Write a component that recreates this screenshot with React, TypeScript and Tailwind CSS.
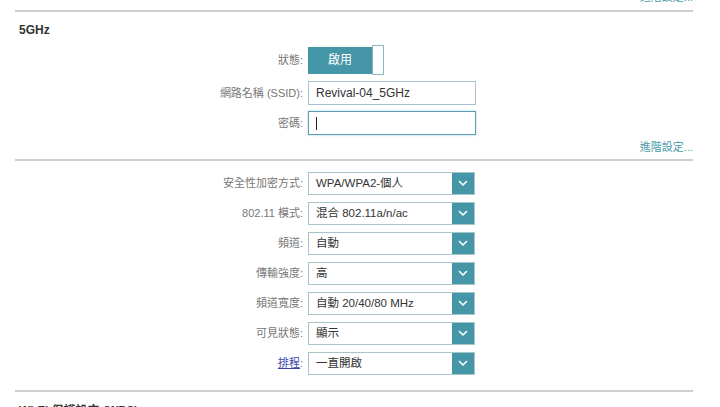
import React from "react";

const font = { fontFamily: '"Liberation Sans", "Noto Sans CJK TC", sans-serif' };

function Chevron() {
  return (
    <svg width="10" height="7" viewBox="0 0 10 7" fill="none">
      <path d="M1.5 1.5 L5 5 L8.5 1.5" stroke="white" strokeWidth="1.6" strokeLinecap="round" strokeLinejoin="round" />
    </svg>
  );
}

function Row({ label, children, link }: { label: string; children: React.ReactNode; link?: boolean }) {
  return (
    <div className="flex items-center">
      <div className="w-[308px] pr-[5px] text-right text-[11px] text-[#777] leading-none">
        {link ? (
          <span>
            <span className="text-[#3a3fa8] underline">{label}</span>:
          </span>
        ) : (
          <span>{label}:</span>
        )}
      </div>
      {children}
    </div>
  );
}

function Select({ label, value, link }: { label: string; value: string; link?: boolean }) {
  return (
    <Row label={label} link={link}>
      <div className="flex h-[23px] w-[167px] border border-[#a8c4cb] bg-white">
        <div className="flex flex-1 items-center pl-[7px] text-[11.5px] text-[#333]">{value}</div>
        <div className="flex w-[22px] items-center justify-center bg-[#4596a6]">
          <Chevron />
        </div>
      </div>
    </Row>
  );
}

export default function App() {
  return (
    <div className="relative h-[407px] w-[720px] overflow-hidden bg-white" style={font}>
      <div className="flex h-[10px] justify-end overflow-hidden pr-[27px]">
        <span className="mt-[-10px] text-[11px] leading-[14px] text-[#4a9aa8]">進階設定...</span>
      </div>
      <div className="ml-[15px] h-[2px] w-[678px] bg-[#cfcfcf]" />
      <div className="flex h-[33px] items-center pl-[19px] pt-[3px] text-[12px] font-bold text-[#333]">5GHz</div>

      <Row label="狀態">
        <div className="flex h-[30px] items-center">
          <div className="flex h-[27px] w-[64px] items-center justify-center bg-[#4596a6] text-[12px] text-white">啟用</div>
          <div className="h-[30px] w-[12px] border border-[#8fb3bd] bg-white" />
        </div>
      </Row>

      <div className="mt-[6px]">
        <Row label="網路名稱 (SSID)">
          <div className="flex h-[24px] w-[168px] items-center border border-[#a8c4cb] bg-white pl-[7px] text-[12px] text-[#333]">
            Revival-04_5GHz
          </div>
        </Row>
      </div>

      <div className="mt-[6px]">
        <Row label="密碼">
          <div className="flex h-[24px] w-[168px] items-center border border-[#5f9cb8] bg-white pl-[7px] shadow-[0_0_2px_rgba(80,150,190,0.5)]">
            <div className="h-[13px] w-[1px] bg-[#222]" />
          </div>
        </Row>
      </div>

      <div className="flex h-[24px] items-center justify-end pr-[27px] text-[11px] text-[#4a9aa8]">進階設定...</div>
      <div className="ml-[15px] h-[2px] w-[678px] bg-[#cfcfcf]" />

      <div className="mt-[11px] flex flex-col gap-[7px]">
        <Select label="安全性加密方式" value="WPA/WPA2-個人" />
        <Select label="802.11 模式" value="混合 802.11a/n/ac" />
        <Select label="頻道" value="自動" />
        <Select label="傳輸強度" value="高" />
        <Select label="頻道寬度" value="自動 20/40/80 MHz" />
        <Select label="可見狀態" value="顯示" />
        <Select label="排程" value="一直開啟" link />
      </div>

      <div className="ml-[15px] mt-[15px] h-[2px] w-[678px] bg-[#cfcfcf]" />
      <div className="mt-[12px] pl-[19px] text-[12px] font-bold leading-[14px] text-[#333]">Wi-Fi 保護設定 (WPS)</div>
    </div>
  );
}
